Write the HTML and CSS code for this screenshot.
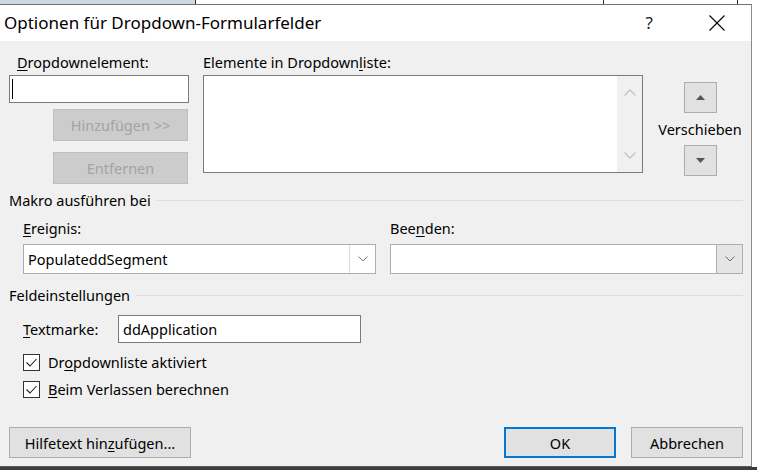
FILE: index.html
```html
<!DOCTYPE html>
<html lang="de">
<head>
<meta charset="utf-8">
<title>Optionen für Dropdown-Formularfelder</title>
<link rel="stylesheet" href="styles.css">
</head>
<body>
<div class="dialog">
  <div class="titlebar">
    <span class="title">Optionen für Dropdown-Formularfelder</span>
    <span class="help">?</span>
    <span class="close"><svg width="16" height="16" viewBox="0 0 16 16"><path d="M0.5 0.5 L15.5 15.5 M15.5 0.5 L0.5 15.5" stroke="#000" stroke-width="1.1" fill="none"/></svg></span>
  </div>
  <div class="content">
    <div class="top">
      <div class="col-left">
        <div class="label lbl-item"><u>D</u>ropdownelement:</div>
        <div class="textbox item-box"><span class="caret"></span></div>
        <div class="btn disabled btn-add">Hinzufügen &gt;&gt;</div>
        <div class="btn disabled btn-remove">Entfernen</div>
      </div>
      <div class="col-mid">
        <div class="label">Elemente in Dropdown<u>l</u>iste:</div>
        <div class="listbox">
          <div class="list-area"></div>
          <div class="scrollbar">
            <svg width="12" height="7" viewBox="0 0 12 7"><path d="M0.5 6.5 L6 1 L11.5 6.5" stroke="#c4c4c4" stroke-width="1.3" fill="none"/></svg>
            <svg width="12" height="7" viewBox="0 0 12 7"><path d="M0.5 0.5 L6 6 L11.5 0.5" stroke="#c4c4c4" stroke-width="1.3" fill="none"/></svg>
          </div>
        </div>
      </div>
      <div class="col-right">
        <div class="movebtn"><svg width="9" height="5" viewBox="0 0 9 5"><path d="M0 5 L4.5 0 L9 5 Z" fill="#555"/></svg></div>
        <div class="move-label">Verschieben</div>
        <div class="movebtn"><svg width="9" height="5" viewBox="0 0 9 5"><path d="M0 0 L4.5 5 L9 0 Z" fill="#555"/></svg></div>
      </div>
    </div>

    <div class="group-head head-makro"><span>Makro ausführen bei</span><span class="rule"></span></div>
    <div class="macro-grid">
      <div class="field">
        <div class="label"><u>E</u>reignis:</div>
        <div class="combo">
          <span class="combo-text">PopulateddSegment</span>
          <span class="combo-btn"><svg width="10" height="6" viewBox="0 0 10 6"><path d="M0.5 0.5 L5 5 L9.5 0.5" stroke="#7a7a7a" stroke-width="1" fill="none"/></svg></span>
        </div>
      </div>
      <div class="field">
        <div class="label">Bee<u>n</u>den:</div>
        <div class="combo">
          <span class="combo-text"></span>
          <span class="combo-btn hot"><svg width="10" height="6" viewBox="0 0 10 6"><path d="M0.5 0.5 L5 5 L9.5 0.5" stroke="#6a6a6a" stroke-width="1" fill="none"/></svg></span>
        </div>
      </div>
    </div>

    <div class="group-head head-feld"><span>Feldeinstellungen</span><span class="rule"></span></div>
    <div class="bookmark-row">
      <span class="bm-label"><u>T</u>extmarke:</span>
      <div class="textbox bm-box">ddApplication</div>
    </div>
    <div class="check-row first">
      <span class="checkbox"><svg width="17" height="17" viewBox="0 0 17 17"><path d="M3.5 8.5 L7 12 L13.5 5" stroke="#222" stroke-width="1.1" fill="none"/></svg></span>
      <span>Dr<u>o</u>pdownliste aktiviert</span>
    </div>
    <div class="check-row">
      <span class="checkbox"><svg width="17" height="17" viewBox="0 0 17 17"><path d="M3.5 8.5 L7 12 L13.5 5" stroke="#222" stroke-width="1.1" fill="none"/></svg></span>
      <span><u>B</u>eim Verlassen berechnen</span>
    </div>

    <div class="bottom">
      <div class="btn btn-help">Hilfetext hin<u>z</u>ufügen...</div>
      <div class="spacer"></div>
      <div class="btn btn-ok">OK</div>
      <div class="btn btn-cancel">Abbrechen</div>
    </div>
  </div>
</div>
</body>
</html>
```

FILE: styles.css
```css
html, body {
  margin: 0;
  padding: 0;
}
body {
  width: 757px;
  height: 470px;
  overflow: hidden;
  font-family: "Segoe UI", "Noto Sans", sans-serif;
  font-size: 14.5px;
  color: #000;
  background:
    linear-gradient(#3c3c3c, #3c3c3c) 0 467px / 100% 3px no-repeat,
    linear-gradient(#cfd8e4, #cfd8e4) 0 0 / 195px 4px no-repeat,
    linear-gradient(#2b2b2b, #2b2b2b) 195px 0 / 1px 4px no-repeat,
    linear-gradient(#2b2b2b, #2b2b2b) 603px 0 / 1px 4px no-repeat,
    linear-gradient(#2b2b2b, #2b2b2b) 737px 0 / 1px 4px no-repeat,
    #ffffff;
}
u {
  text-decoration: underline;
  text-decoration-thickness: 1px;
  text-underline-offset: 2px;
}
.dialog {
  margin-top: 4px;
  width: 751px;
  height: 461px;
  border-top: 1px solid #707070;
  border-right: 1px solid #8c8c8c;
  border-bottom: 1px solid #5a5a5a;
  background: #f0f0f0;
  display: flex;
  flex-direction: column;
}
.titlebar {
  height: 36px;
  background: #fff;
  display: flex;
  align-items: center;
  padding-left: 4px;
}
.title {
  font-size: 17px;
  line-height: 22px;
  flex: 1;
}
.help {
  font-size: 17px;
  line-height: 22px;
  color: #222;
  margin-right: 56px;
}
.close {
  display: flex;
  margin-right: 26px;
}
.content {
  flex: 1;
  display: flex;
  flex-direction: column;
  padding: 0 8px 8px 9px;
}
.label {
  line-height: 20px;
  height: 20px;
  white-space: nowrap;
}
.top {
  display: flex;
  align-items: flex-start;
}
.col-left {
  width: 180px;
  padding-top: 11px;
  display: flex;
  flex-direction: column;
}
.lbl-item {
  margin-left: 8px;
}
.textbox {
  box-sizing: border-box;
  background: #fff;
  border: 1px solid #7a7a7a;
  height: 28px;
  line-height: 26px;
  padding-left: 3px;
}
.item-box {
  margin-top: 3px;
  width: 180px;
  position: relative;
}
.caret {
  position: absolute;
  left: 2px;
  top: 3px;
  width: 1px;
  height: 20px;
  background: #000;
}
.btn {
  box-sizing: border-box;
  height: 32px;
  border: 1px solid #adadad;
  background: #e1e1e1;
  display: flex;
  align-items: center;
  justify-content: center;
  white-space: nowrap;
}
.btn.disabled {
  background: #cccccc;
  border-color: #bfbfbf;
  color: #a3a3a3;
}
.btn-add {
  margin: 6px 0 0 44px;
  width: 135px;
}
.btn-remove {
  margin: 11px 0 0 44px;
  width: 135px;
}
.col-mid {
  margin-left: 14px;
  width: 440px;
  padding-top: 11px;
}
.listbox {
  margin-top: 3px;
  box-sizing: border-box;
  height: 98px;
  border: 1px solid #7a7a7a;
  background: #fff;
  display: flex;
}
.list-area {
  flex: 1;
}
.scrollbar {
  width: 25px;
  background: #f0f0f0;
  display: flex;
  flex-direction: column;
  align-items: center;
  justify-content: space-between;
  padding: 13px 0 13px;
}
.col-right {
  margin-left: 15px;
  width: 84px;
  padding-top: 41px;
  display: flex;
  flex-direction: column;
  align-items: center;
}
.movebtn {
  box-sizing: border-box;
  width: 33px;
  height: 31px;
  border: 1px solid #adadad;
  background: #e1e1e1;
  display: flex;
  align-items: center;
  justify-content: center;
}
.move-label {
  line-height: 20px;
  margin: 6px 0 6px;
  white-space: nowrap;
}
.group-head {
  display: flex;
  align-items: center;
  line-height: 20px;
  height: 20px;
}
.group-head .rule {
  flex: 1;
  height: 1px;
  background: #dcdcdc;
  margin-left: 6px;
}
.head-makro {
  margin-top: 6px;
}
.macro-grid {
  margin-top: 8px;
  padding-left: 14px;
  display: grid;
  grid-template-columns: 353px 353px;
  column-gap: 14px;
}
.combo {
  margin-top: 6px;
  box-sizing: border-box;
  height: 30px;
  border: 1px solid #adadad;
  background: #fff;
  display: flex;
}
.combo-text {
  flex: 1;
  line-height: 28px;
  padding-left: 4px;
}
.combo-btn {
  width: 25px;
  border-left: 1px solid #d9d9d9;
  display: flex;
  align-items: center;
  justify-content: center;
}
.combo-btn.hot {
  background: #e5e5e5;
  border-left-color: #adadad;
}
.head-feld {
  margin-top: 11px;
}
.bookmark-row {
  margin-top: 10px;
  padding-left: 14px;
  display: flex;
  align-items: center;
}
.bm-label {
  width: 95px;
  line-height: 20px;
}
.bm-box {
  width: 243px;
  padding-left: 4px;
}
.check-row {
  padding-left: 14px;
  display: flex;
  align-items: center;
  height: 20px;
  line-height: 20px;
  margin-top: 7px;
}
.check-row.first {
  margin-top: 9px;
}
.checkbox {
  box-sizing: border-box;
  width: 17px;
  height: 17px;
  border: 1px solid #333;
  background: #fff;
  display: flex;
  margin-right: 8px;
}
.checkbox svg {
  margin: -1px;
}
.bottom {
  margin-top: auto;
  display: flex;
}
.bottom .btn {
  height: 31px;
}
.btn-help {
  width: 182px;
}
.spacer {
  flex: 1;
}
.btn-ok {
  width: 112px;
  border: 2px solid #0078d7;
  margin-right: 15px;
}
.btn-cancel {
  width: 112px;
}
```
